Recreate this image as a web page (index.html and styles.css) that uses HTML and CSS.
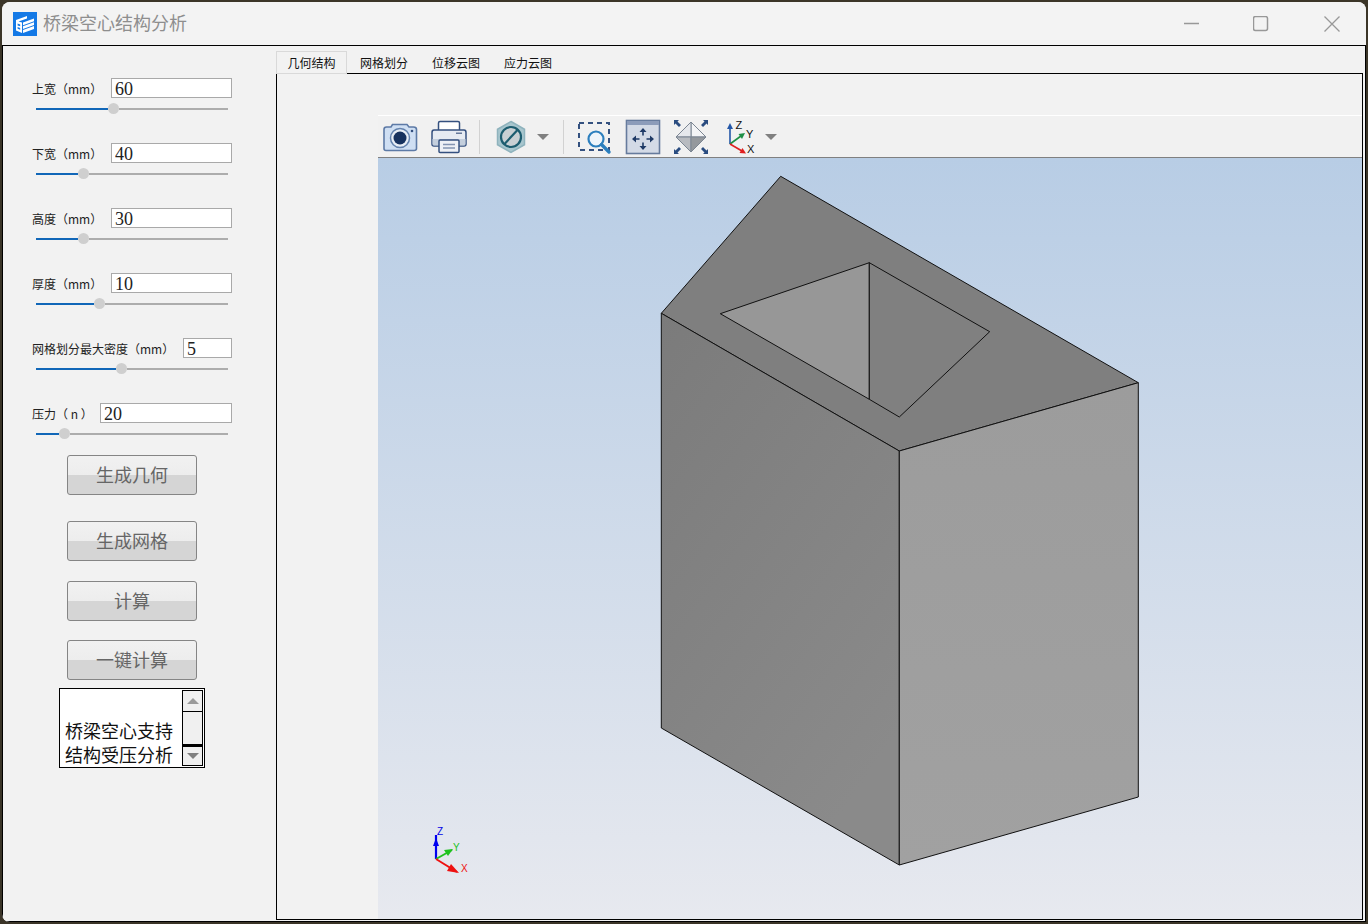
FILE: index.html
```html
<!DOCTYPE html>
<html lang="zh">
<head>
<meta charset="utf-8">
<title>桥梁空心结构分析</title>
<link rel="stylesheet" href="styles.css">
</head>
<body>
<div class="window">
  <header class="titlebar">
    <svg class="logo" viewBox="0 0 24 24">
      <rect width="24" height="24" fill="#1479e6"/>
      <path d="M3 8 L14 4 L14 6.5 L5.5 9.5 L9 10.5 L9 21 L3 18.5Z" fill="#fff"/>
      <path d="M4.6 11.6l2.6 .9v1.8l-2.6-.9zM4.6 15l2.6 .9v1.8l-2.6-.9z" fill="#1479e6"/>
      <path d="M10 10.5 L21 6.5 V9.3 L10 13.3Z M10 14.3 L21 10.3 V13.1 L10 17.1Z M10 18.1 L21 14.1 V17 L10 21Z" fill="#fff"/>
    </svg>
    <span class="title">桥梁空心结构分析</span>
    <svg class="ctl ctl-min" viewBox="0 0 16 16"><path d="M0 7.5H15"/></svg>
    <svg class="ctl ctl-max" viewBox="0 0 16 16"><rect x="0.5" y="0.5" width="14" height="14" rx="2"/></svg>
    <svg class="ctl ctl-close" viewBox="0 0 16 16"><path d="M0.5 0.5L15.5 15.5M15.5 0.5L0.5 15.5"/></svg>
  </header>
  <div class="client">
    <aside class="panel">
      <div class="param">
        <div class="field"><label>上宽（mm）</label><input class="inp" value="60"></div>
        <div class="slider"><i class="fill" style="width:72px"></i><i class="thumb"></i><i class="rest"></i></div>
      </div>
      <div class="param">
        <div class="field"><label>下宽（mm）</label><input class="inp" value="40"></div>
        <div class="slider"><i class="fill" style="width:42px"></i><i class="thumb"></i><i class="rest"></i></div>
      </div>
      <div class="param">
        <div class="field"><label>高度（mm）</label><input class="inp" value="30"></div>
        <div class="slider"><i class="fill" style="width:42px"></i><i class="thumb"></i><i class="rest"></i></div>
      </div>
      <div class="param">
        <div class="field"><label>厚度（mm）</label><input class="inp" value="10"></div>
        <div class="slider"><i class="fill" style="width:58px"></i><i class="thumb"></i><i class="rest"></i></div>
      </div>
      <div class="param">
        <div class="field"><label>网格划分最大密度（mm）</label><input class="inp inp-s" value="5"></div>
        <div class="slider"><i class="fill" style="width:80px"></i><i class="thumb"></i><i class="rest"></i></div>
      </div>
      <div class="param">
        <div class="field"><label>压力（ n ）</label><input class="inp inp-l" value="20"></div>
        <div class="slider"><i class="fill" style="width:23px"></i><i class="thumb"></i><i class="rest"></i></div>
      </div>
      <button class="btn btn-1">生成几何</button>
      <button class="btn btn-2">生成网格</button>
      <button class="btn btn-3">计算</button>
      <button class="btn btn-4">一键计算</button>
      <div class="memo">
        <div class="memo-text">桥梁空心支持<br>结构受压分析</div>
        <div class="scroll">
          <div class="sbtn"><svg viewBox="0 0 12 6"><path d="M6 0L12 6H0Z"/></svg></div>
          <div class="strack"></div>
          <div class="sbtn sbtn-down"><svg viewBox="0 0 12 6"><path d="M0 0H12L6 6Z"/></svg></div>
        </div>
      </div>
    </aside>
    <main class="tabs">
      <nav class="tabbar">
        <span class="tab tab-on">几何结构</span>
        <span class="tab">网格划分</span>
        <span class="tab">位移云图</span>
        <span class="tab">应力云图</span>
      </nav>
      <section class="pane">
        <div class="viewer">
          <div class="toolbar">
            <svg class="ti" viewBox="0 0 36 36">
              <path d="M2 10.5Q2 8 4.500 8H9L10.500 5.500H25L27 8H31.500Q34.500 8 34.500 10.500V29.500Q34.500 31.500 32 31.500H4Q2 31.500 2 29.500Z" fill="#cfdff3" stroke="#5d7aa6" stroke-width="1.600"/>
              <circle cx="18" cy="19" r="9.500" fill="#e8eef6" stroke="#6483ae" stroke-width="1.500"/>
              <circle cx="18" cy="19" r="6.500" fill="#17325f"/>
              <circle cx="30" cy="12" r="1.300" fill="#33507f"/>
            </svg>
            <svg class="ti ml13" viewBox="0 0 36 36">
              <rect x="7.500" y="2.500" width="21" height="12" rx="1.500" fill="#fff" stroke="#34507f" stroke-width="1.500"/>
              <path d="M3 11H33Q35 11 35 13.500V25Q35 27 33 27H3Q1 27 1 25V13.500Q1 11 3 11Z" fill="#e6ebf2" stroke="#34507f" stroke-width="1.500"/>
              <path d="M1.500 20H34.500V25Q34.500 26.500 33 26.500H3Q1.500 26.500 1.500 25Z" fill="#c4cfdd"/>
              <rect x="25" y="13.500" width="6" height="1.500" fill="#66799a"/>
              <rect x="8" y="21" width="20" height="12.500" rx="1" fill="#eef1f6" stroke="#34507f" stroke-width="1.500"/>
              <path d="M12 25.500H24M12 29H24" stroke="#8495b2" stroke-width="1.300"/>
            </svg>
            <i class="sep ml12"></i>
            <svg class="ti ml13" viewBox="0 0 36 36">
              <path d="M18 2.500L31.500 10.250V25.750L18 33.500L4.500 25.750V10.250Z" fill="#a8c6ce" stroke="#8fb3bd" stroke-width="1.500"/>
              <circle cx="18" cy="18" r="10" fill="#c9d0d4" stroke="#1d5d70" stroke-width="2.200"/>
              <path d="M11.500 25L24.500 11" stroke="#1d5d70" stroke-width="2.200"/>
            </svg>
            <svg class="caret ml8" viewBox="0 0 12 6"><path d="M0 0H12L6 6Z"/></svg>
            <i class="sep ml14"></i>
            <svg class="ti ml12" viewBox="0 0 36 36">
              <rect x="3" y="4" width="30" height="27" fill="none" stroke="#33507f" stroke-width="2" stroke-dasharray="5 4"/>
              <circle cx="20" cy="20" r="7.500" fill="#eef4fa" stroke="#2c7fbe" stroke-width="2.200"/>
              <path d="M25.500 25.500L33 33" stroke="#2c7fbe" stroke-width="3.400" stroke-linecap="round"/>
            </svg>
            <svg class="ti ml13" viewBox="0 0 36 36">
              <rect x="1.500" y="1.500" width="33" height="33" fill="#d3dae6" stroke="#667b9d" stroke-width="1.600"/>
              <rect x="2" y="2" width="32" height="4" fill="#8c9cba"/>
              <path d="M18 12V16.500M18 23.500V28M10 20H14.500M21.500 20H26" stroke="#1f3a66" stroke-width="1.600"/>
              <path d="M18 9l3.500 4h-7zM18 31l-3.500-4h7zM7 20l4-3.500v7zM29 20l-4 3.500v-7z" fill="#1f3a66"/>
            </svg>
            <svg class="ti ml12" viewBox="0 0 36 36">
              <path d="M18 3L33 18H18Z" fill="#f3f4f6" stroke="#7b8592"/>
              <path d="M18 3L3 18H18Z" fill="#e6e8ec" stroke="#7b8592"/>
              <path d="M3 18L18 33V18Z" fill="#b8bbc0" stroke="#7b8592"/>
              <path d="M33 18L18 33V18Z" fill="#94989d" stroke="#7b8592"/>
              <path d="M1 1L6 1L4.500 2.500L8 6L6 8L2.500 4.500L1 6Z M35 1L35 6L33.500 4.500L30 8L28 6L31.500 2.500L30 1Z M1 35L1 30L2.500 31.500L6 28L8 30L4.500 33.500L6 35Z M35 35L30 35L31.500 33.500L28 30L30 28L33.500 31.500L35 30Z" fill="#2a4c80"/>
            </svg>
            <svg class="ti ml14" viewBox="0 0 36 36">
              <path d="M7 25V9" stroke="#2457a8" stroke-width="1.600"/>
              <path d="M7 4L10 10H4Z" fill="#2457a8"/>
              <path d="M7 25L18 17" stroke="#1f8f45" stroke-width="1.600"/>
              <path d="M22 14L19 20L15.500 15Z" fill="#1f8f45"/>
              <path d="M7 25L19 32" stroke="#e02020" stroke-width="1.600"/>
              <path d="M23 34.500L16.500 34L19.500 29Z" fill="#e02020"/>
              <text x="12.500" y="9.500" class="axl">Z</text>
              <text x="23" y="18.500" class="axl">Y</text>
              <text x="24" y="34" class="axl">X</text>
            </svg>
            <svg class="caret ml6" viewBox="0 0 12 6"><path d="M0 0H12L6 6Z"/></svg>
          </div>
          <svg class="scene" viewBox="378 158 984 761">
            <defs>
              <linearGradient id="sky" x1="0" y1="0" x2="0" y2="1">
                <stop offset="0" stop-color="#b8cde5"/>
                <stop offset="1" stop-color="#e7e9ef"/>
              </linearGradient>
              <linearGradient id="leftf" x1="0" y1="0" x2="0.600" y2="1">
                <stop offset="0" stop-color="#7b7b7b"/>
                <stop offset="1" stop-color="#8a8a8a"/>
              </linearGradient>
              <linearGradient id="rightf" x1="0" y1="0" x2="0" y2="1">
                <stop offset="0" stop-color="#9c9c9c"/>
                <stop offset="1" stop-color="#a1a1a1"/>
              </linearGradient>
            </defs>
            <rect x="378" y="158" width="984" height="761" fill="url(#sky)"/>
            <g stroke="#111" stroke-width="1" stroke-linejoin="round">
              <polygon points="780.700,176.300 1138.300,382.700 899.300,451 661.300,313.300" fill="#7f7f7f"/>
              <polygon points="661.300,313.300 899.300,451 899.300,865 661.300,728" fill="url(#leftf)"/>
              <polygon points="899.300,451 1138.300,382.700 1138.300,797 899.300,865" fill="url(#rightf)"/>
              <polygon points="720.300,313.700 869.300,262.700 869.300,399.300" fill="#979797"/>
              <polygon points="869.300,262.700 989.700,331.700 899.300,417 869.300,399.300" fill="#808080"/>
            </g>
            <path d="M436 859V835" stroke="#0000f0" stroke-width="2.200"/>
            <path d="M436 838L439 846H433Z" fill="#0000f0"/>
            <path d="M436 859L452 850" stroke="#1fc21f" stroke-width="2"/>
            <path d="M453 849L448 856L444 850Z" fill="#1fc21f"/>
            <path d="M436 859L457 872" stroke="#ee1111" stroke-width="2"/>
            <path d="M459 873L447 871L451 864Z" fill="#ee1111"/>
            <text x="437" y="835" class="tl tz">Z</text>
            <text x="453" y="851" class="tl ty">Y</text>
            <text x="461" y="872" class="tl tx">X</text>
          </svg>
        </div>
      </section>
    </main>
  </div>
</div>
</body>
</html>
```
FILE: styles.css
```css
* { box-sizing: border-box; }
html, body { margin: 0; height: 924px; overflow: hidden; }
body {
  background: #3b3528;
  font-family: "Noto Sans CJK SC", "Liberation Sans", sans-serif;
  padding: 2px 2px 2px 2px;
}
.window {
  height: 920px;
  background: #f3f3f3;
  border-radius: 8px 8px 0 8px;
  display: flex;
  flex-direction: column;
  overflow: hidden;
}
.titlebar {
  height: 43px;
  flex: none;
  display: flex;
  align-items: center;
  padding-left: 11px;
  background: #f3f3f3;
}
.logo { width: 24px; height: 24px; flex: none; }
.title { margin-left: 6px; padding-bottom: 3px; font-size: 18px; color: #8e8e8e; }
.ctl { width: 16px; height: 16px; flex: none; fill: none; stroke: #989898; stroke-width: 1.300; }
.ctl-min { margin-left: auto; }
.ctl-max { margin-left: 53px; stroke-width: 1.500; }
.ctl-close { margin-left: 55px; margin-right: 26px; }
.client {
  flex: 1;
  display: flex;
  min-height: 0;
  background: #f2f2f2;
  border: 1px solid #000;
}
.panel {
  width: 273px;
  flex: none;
  padding: 32px 0 0 29px;
  display: flex;
  flex-direction: column;
  align-items: flex-start;
}
.param { width: 200px; height: 35px; margin-bottom: 30px; }
.param:nth-child(6) { margin-bottom: 17px; }
.field { height: 20px; display: flex; align-items: center; justify-content: space-between; }
.field label { font-size: 12px; color: #222; white-space: nowrap; }
.inp {
  width: 121px;
  height: 20px;
  padding: 2px 3px 0;
  border: 1px solid #a9a9a9;
  border-radius: 0;
  background: #fff;
  font-family: "Liberation Serif", serif;
  font-size: 18px;
  color: #222;
  outline: none;
}
.inp-s { width: 49px; }
.inp-l { width: 132px; }
.slider {
  width: 192px;
  height: 11px;
  margin: 5px 0 0 4px;
  display: flex;
  align-items: center;
}
.fill { height: 2px; background: #1167b8; flex: none; }
.rest { height: 2px; background: #adadad; flex: 1; }
.thumb { width: 11px; height: 11px; border-radius: 50%; background: #cfcfcf; flex: none; }
.btn {
  width: 130px;
  height: 40px;
  margin-left: 35px;
  padding: 0 0 3px;
  border: 1px solid #858585;
  border-radius: 3px;
  background: linear-gradient(#f1f1f1 0, #ededed 50%, #d5d5d5 50%, #d5d5d5 100%);
  font-family: "Noto Sans CJK SC", sans-serif;
  font-size: 18px;
  color: #666;
  flex: none;
}
.btn-2 { margin-top: 26px; }
.btn-3 { margin-top: 20px; }
.btn-4 { margin-top: 19px; }
.memo {
  width: 146px;
  height: 80px;
  margin: 8px 0 0 27px;
  border: 1px solid #000;
  background: #fff;
  display: flex;
  flex: none;
}
.memo-text {
  flex: 1;
  align-self: flex-end;
  padding: 0 0 1px 5px;
  font-size: 18px;
  line-height: 24px;
  color: #111;
  white-space: nowrap;
}
.scroll {
  width: 21px;
  height: 76px;
  margin: 1px 1px 0 0;
  border: 1px solid #000;
  background: #f0f0f0;
  display: flex;
  flex-direction: column;
  flex: none;
}
.sbtn {
  height: 21px;
  flex: none;
  display: flex;
  align-items: center;
  justify-content: center;
  border-bottom: 1px solid #000;
}
.sbtn svg { width: 12px; height: 6px; fill: #9a9a9a; }
.sbtn-down { border-bottom: 0; border-top: 3px solid #000; }
.sbtn-down svg { fill: #808080; }
.strack { flex: 1; }
.tabs { flex: 1; min-width: 0; display: flex; flex-direction: column; padding: 5px 2px 1px 0; }
.tabbar { display: flex; height: 22px; flex: none; position: relative; z-index: 1; }
.tab {
  width: 72px;
  height: 22px;
  font-size: 12px;
  line-height: 24px;
  text-align: center;
  color: #111;
}
.tab-on {
  width: 71px;
  height: 23px;
  margin-right: 1px;
  border: 1px solid #d9d9d9;
  background: #f2f2f2;
  line-height: 22px;
}
.pane {
  flex: 1;
  min-height: 0;
  border: 1px solid #000;
  padding: 41px 0 0 101px;
  display: flex;
}
.viewer { flex: 1; display: flex; flex-direction: column; min-width: 0; }
.toolbar {
  height: 43px;
  flex: none;
  display: flex;
  align-items: center;
  padding-left: 4px;
  background: #f1f1f1;
  border-top: 1px solid #fff;
  border-bottom: 1px solid #808080;
}
.ti { width: 36px; height: 36px; flex: none; }
.sep { width: 1px; height: 34px; background: #d2d2d2; flex: none; }
.caret { width: 12px; height: 6px; fill: #808080; flex: none; }
.ml6 { margin-left: 6px; }
.ml8 { margin-left: 8px; }
.ml12 { margin-left: 12px; }
.ml13 { margin-left: 13px; }
.ml14 { margin-left: 14px; }
.axl { font-family: "Liberation Sans", sans-serif; font-size: 11px; fill: #111; }
.scene { flex: 1; width: 100%; min-height: 0; display: block; }
.tl { font-family: "Liberation Sans", sans-serif; font-size: 10px; }
.tz { fill: #0000e6; }
.ty { fill: #1fc21f; }
.tx { fill: #ee1111; }
```
